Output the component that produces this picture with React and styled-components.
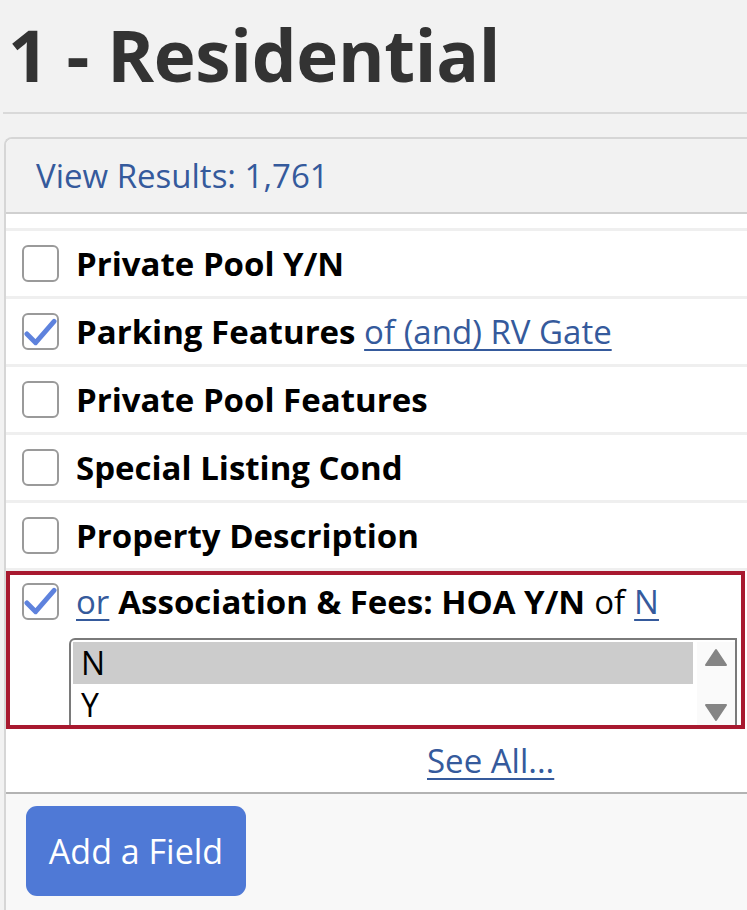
import React from "react";
import styled, { createGlobalStyle } from "styled-components";

const Global = createGlobalStyle`
  html, body { margin: 0; padding: 0; background: #f2f2f2; }
  body { font-family: "Open Sans", "Noto Sans", sans-serif; overflow: hidden; }
`;

const Page = styled.div`
  width: 747px;
  height: 910px;
  overflow: hidden;
`;

const Title = styled.h1`
  margin: 0 0 0 3px;
  padding: 10px 0 0 5px;
  height: 114px;
  box-sizing: border-box;
  font-size: 71px;
  line-height: 90px;
  font-weight: 700;
  color: #333333;
  letter-spacing: -0.3px;
  border-bottom: 2px solid #d9d9d9;
`;

const Panel = styled.section`
  margin: 23px 0 0 4px;
  border: 2px solid #d6d6d6;
  border-right: none;
  border-top-left-radius: 8px;
  background: #fff;
  overflow: hidden;
`;

const PanelHeader = styled.div`
  height: 73px;
  background: #f2f2f2;
  border-bottom: 2px solid #d0d0d0;
  display: flex;
  align-items: center;
  padding-left: 30px;
  font-size: 33px;
  color: #355a9c;
`;

const List = styled.div`
  padding-top: 14px;
  background: #fff;
`;

const Row = styled.div`
  display: flex;
  align-items: center;
  gap: 17px;
  height: 65px;
  padding-left: 16px;
  border-top: 3px solid #efefef;
`;

const Box = styled.span`
  flex: none;
  width: 33px;
  height: 33px;
  border: 2px solid #9a9a9a;
  border-radius: 6px;
  background: #fff;
  display: flex;
  align-items: center;
  justify-content: center;
`;

const Label = styled.span`
  font-size: 33px;
  font-weight: 700;
  color: #000;
  white-space: nowrap;
`;

const Link = styled.a`
  color: #355a9c;
  text-decoration: underline;
  text-decoration-thickness: 2px;
  text-underline-offset: 5px;
  font-weight: 400;
`;

const Plain = styled.span`
  font-weight: 400;
`;

const ActiveRow = styled.div`
  border-top: 3px solid #efefef;
`;

const ActiveBox = styled.div`
  margin: 0 2px 0 0;
  border: 4px solid #a8192f;
  height: 150px;
  overflow: hidden;
  background: #fff;
`;

const ActiveHead = styled.div`
  display: flex;
  align-items: center;
  gap: 17px;
  height: 52px;
  padding-left: 12px;
`;

const ActiveLabel = styled(Label)`
  display: flex;
  gap: 9px;
  align-items: baseline;
`;

const SelectBox = styled.div`
  margin: 11px 4px 0 59px;
  border: 2px solid #7a7a7a;
  border-bottom: none;
  border-top-left-radius: 6px;
  height: 100px;
  display: flex;
  padding: 2px 0 0 2px;
`;

const Options = styled.div`
  flex: 1;
  display: flex;
  flex-direction: column;
`;

const Option = styled.div`
  height: 42px;
  line-height: 42px;
  padding-left: 8px;
  font-size: 32px;
  color: #000;
  background: ${(p) => (p.$selected ? "#cccccc" : "transparent")};
`;

const Scroll = styled.div`
  width: 38px;
  margin-left: 4px;
  background: #fafafa;
  display: flex;
  flex-direction: column;
  justify-content: space-between;
  align-items: center;
  padding: 6px 0 4px;
  box-sizing: border-box;
  height: 84px;
`;

const SeeAllRow = styled.div`
  height: 63px;
  display: flex;
  align-items: center;
  padding-left: 421px;
  font-size: 33px;
`;

const Footer = styled.div`
  border-top: 2px solid #b3b3b3;
  background: #f8f8f8;
  padding: 12px 0 20px 20px;
  height: 120px;
`;

const Button = styled.button`
  width: 220px;
  height: 90px;
  border: none;
  border-radius: 11px;
  background: #4f79d6;
  color: #fff;
  font-family: "Open Sans", "Noto Sans", sans-serif;
  font-size: 34px;
  font-weight: 500;
  padding: 0;
`;

const Check = () => (
  <svg width="34" height="30" viewBox="0 0 34 30">
    <path
      d="M3 17 L12 26 L31 4"
      fill="none"
      stroke="#4d74d9"
      strokeWidth="5"
      strokeLinecap="round"
      strokeLinejoin="round"
      opacity="0.9"
    />
  </svg>
);

const Tri = ({ down }) => (
  <svg width="24" height="20" viewBox="0 0 24 20">
    <path
      d={down ? "M2 3 H22 L12 18 Z" : "M2 17 H22 L12 2 Z"}
      fill="#858585"
      stroke="#858585"
      strokeWidth="2"
      strokeLinejoin="round"
    />
  </svg>
);

const rows = [
  { label: "Private Pool Y/N" },
  { label: "Parking Features", checked: true, extra: "of (and) RV Gate" },
  { label: "Private Pool Features" },
  { label: "Special Listing Cond" },
  { label: "Property Description" },
];

export default function App() {
  return (
    <Page>
      <Global />
      <Title>1 - Residential</Title>
      <Panel>
        <PanelHeader>View Results: 1,761</PanelHeader>
        <List>
          {rows.map((r) => (
            <Row key={r.label}>
              <Box>{r.checked && <Check />}</Box>
              <Label>
                {r.label}
                {r.extra && (
                  <>
                    {" "}
                    <Link href="#">{r.extra}</Link>
                  </>
                )}
              </Label>
            </Row>
          ))}
          <ActiveRow>
            <ActiveBox>
              <ActiveHead>
                <Box>
                  <Check />
                </Box>
                <ActiveLabel>
                  <Link href="#">or</Link>
                  <span>Association &amp; Fees: HOA Y/N</span>
                  <Plain>of</Plain>
                  <Link href="#">N</Link>
                </ActiveLabel>
              </ActiveHead>
              <SelectBox>
                <Options>
                  <Option $selected>N</Option>
                  <Option>Y</Option>
                </Options>
                <Scroll>
                  <Tri />
                  <Tri down />
                </Scroll>
              </SelectBox>
            </ActiveBox>
          </ActiveRow>
          <SeeAllRow>
            <Link href="#">See All...</Link>
          </SeeAllRow>
        </List>
        <Footer>
          <Button>Add a Field</Button>
        </Footer>
      </Panel>
    </Page>
  );
}
